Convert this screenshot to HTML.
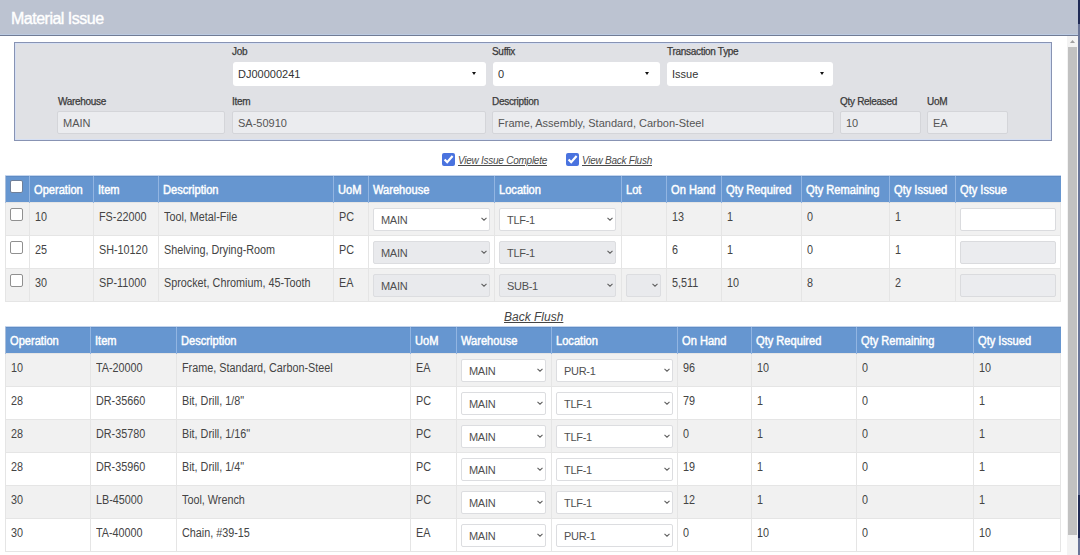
<!DOCTYPE html><html><head><meta charset="utf-8"><style>
*{box-sizing:border-box;margin:0;padding:0}
html,body{width:1080px;height:555px;overflow:hidden;background:#fff;font-family:"Liberation Sans", sans-serif;color:#333}
.abs{position:absolute}
#title{left:0;top:0;width:1078px;height:36px;background:#bcc3d1;border-bottom:1px solid #717c95;box-shadow:inset 0 -1px #bccbe2}
#title span{position:absolute;left:11px;top:10px;font-size:16px;letter-spacing:-0.5px;-webkit-text-stroke:0.4px #fff;color:#fff;line-height:18px;white-space:nowrap}
#strip{left:1078px;top:0;width:2px;height:555px;background:linear-gradient(#1f2a55 0,#1f2a55 24px,#6a7598 24px,#6a7598 495px,#1f2a55 495px,#1f2a55 538px,#6a7598 538px)}
#sb{left:1067px;top:36px;width:11px;height:519px;background:#f3f3f3}
#thumb{left:1068px;top:47px;width:9px;height:488px;background:#c1c1c1}
#panel{left:14px;top:42px;width:1038px;height:99px;background:#e0e1e5;border:1px solid #8893b3;box-shadow:inset 0 0 0 1px #d5dff3}
.lbl{position:absolute;font-size:10px;letter-spacing:-0.3px;color:#3a3a3a;-webkit-text-stroke:0.25px #3a3a3a;line-height:12px;white-space:nowrap}
.sel{position:absolute;height:24px;background:#fff;border-radius:3px}
.sel span{position:absolute;left:5px;top:5px;font-size:11px;color:#333;line-height:14px;white-space:nowrap}
.sel i{position:absolute;top:10px;width:0;height:0;border-left:2.5px solid transparent;border-right:2.5px solid transparent;border-top:3px solid #111}
.ro{position:absolute;height:23px;background:#ebecef;border:1px solid #d4d5d9;border-radius:2px}
.ro span{position:absolute;left:5px;top:4px;font-size:11px;color:#555;line-height:14px;white-space:nowrap}
.cb{position:absolute;width:13px;height:13px;background:#4a73df;border-radius:2px}
.cbl{position:absolute;font-size:10px;letter-spacing:-0.25px;font-style:italic;text-decoration:underline;color:#4a4a4a;line-height:12px;white-space:nowrap}
table{position:absolute;border-collapse:collapse;table-layout:fixed}
th{background:#6696d0;color:#fff;font-weight:bold;font-size:12px;text-align:left;height:27px;padding:0 0 0 4px;border-left:1px solid #92b5e2;border-top:1px solid #c3d5ee;box-shadow:inset 0 1px 0 #5e8bc4;white-space:nowrap;overflow:hidden}
th b{display:inline-block;transform:scaleX(0.925);transform-origin:0 50%;font-weight:normal;-webkit-text-stroke:0.45px #fff;position:relative;top:1px}
th:first-child{border-left:1px solid #a9bedb}
td{height:33px;font-size:12px;line-height:14px;color:#444;vertical-align:top;padding:7px 0 0 5px;border:1px solid #e5e5e5;white-space:nowrap;overflow:hidden;position:relative}
tr.o td{background:#f1f1f1}
td u{display:inline-block;text-decoration:none;transform:scaleX(0.9);transform-origin:0 0}
tr.e td{background:#fff}
.tsel{position:absolute;top:5px;height:23px;border:1px solid #dcdde0;border-radius:2px;background:#fff}
.tsel.d{background:#e9eaed}
.tsel span{position:absolute;left:7px;top:5px;font-size:11px;color:#505050;line-height:12px;letter-spacing:-0.3px}
.tsel svg{position:absolute;right:2px;top:8px}
.rcb{position:absolute;left:4px;top:5px;width:13px;height:13px;border:1px solid #909090;border-radius:2px;background:#fff}
.qin{position:absolute;left:4px;top:5px;width:96px;height:23px;border:1px solid #dadbde;border-radius:2px;background:#fff}
.qin.d{background:#ebecef}
</style></head><body>
<div id="title" class="abs"><span>Material Issue</span></div>
<div id="strip" class="abs"></div>
<div id="sb" class="abs"></div><div id="thumb" class="abs"></div>
<div id="panel" class="abs"></div>
<div class="lbl" style="left:232px;top:46px">Job</div>
<div class="lbl" style="left:492px;top:46px">Suffix</div>
<div class="lbl" style="left:667px;top:46px">Transaction Type</div>
<div class="sel" style="left:233px;top:62px;width:253px"><span>DJ00000241</span><i style="left:239px"></i></div>
<div class="sel" style="left:493px;top:62px;width:167px"><span>0</span><i style="left:152px"></i></div>
<div class="sel" style="left:667px;top:62px;width:166px"><span>Issue</span><i style="left:153px"></i></div>
<div class="lbl" style="left:58px;top:96px">Warehouse</div>
<div class="lbl" style="left:232px;top:96px">Item</div>
<div class="lbl" style="left:492px;top:96px">Description</div>
<div class="lbl" style="left:840px;top:96px">Qty Released</div>
<div class="lbl" style="left:927px;top:96px">UoM</div>
<div class="ro" style="left:57px;top:111px;width:168px"><span>MAIN</span></div>
<div class="ro" style="left:232px;top:111px;width:254px"><span>SA-50910</span></div>
<div class="ro" style="left:492px;top:111px;width:342px"><span>Frame, Assembly, Standard, Carbon-Steel</span></div>
<div class="ro" style="left:840px;top:111px;width:81px"><span>10</span></div>
<div class="ro" style="left:927px;top:111px;width:81px"><span>EA</span></div>
<div class="cb" style="left:442px;top:153px"><svg width="13" height="13" viewBox="0 0 13 13" style="position:absolute;left:0;top:0"><path d="M2.6 6.4 L5.2 9.2 L10.6 3" fill="none" stroke="#fff" stroke-width="2.2"/></svg></div>
<div class="cbl" style="left:458px;top:155px">View Issue Complete</div>
<div class="cb" style="left:566px;top:153px"><svg width="13" height="13" viewBox="0 0 13 13" style="position:absolute;left:0;top:0"><path d="M2.6 6.4 L5.2 9.2 L10.6 3" fill="none" stroke="#fff" stroke-width="2.2"/></svg></div>
<div class="cbl" style="left:582px;top:155px">View Back Flush</div>
<table style="left:5px;top:175px;width:1055px"><colgroup><col style="width:24px"><col style="width:64px"><col style="width:65px"><col style="width:175px"><col style="width:35px"><col style="width:126px"><col style="width:127px"><col style="width:45px"><col style="width:55px"><col style="width:80px"><col style="width:88px"><col style="width:66px"><col style="width:105px"></colgroup><tr><th style="padding:0"><div class="rcb" style="top:4px;left:4px;border-color:#6f7f99"></div></th><th><b>Operation</b></th><th><b>Item</b></th><th><b>Description</b></th><th><b>UoM</b></th><th><b>Warehouse</b></th><th><b>Location</b></th><th><b>Lot</b></th><th><b>On Hand</b></th><th><b>Qty Required</b></th><th><b>Qty Remaining</b></th><th><b>Qty Issued</b></th><th><b>Qty Issue</b></th></tr><tr class="o"><td style="padding:0"><div class="rcb"></div></td><td><u>10</u></td><td><u>FS-22000</u></td><td><u>Tool, Metal-File</u></td><td><u>PC</u></td><td style="padding:0"><div class="tsel" style="left:4px;width:117px"><span>MAIN</span><svg width="6" height="4" viewBox="0 0 6 4"><path d="M0.5 0.8 L3 3.2 L5.5 0.8" fill="none" stroke="#606060" stroke-width="1.1"/></svg></div></td><td style="padding:0"><div class="tsel" style="left:4px;width:117px"><span>TLF-1</span><svg width="6" height="4" viewBox="0 0 6 4"><path d="M0.5 0.8 L3 3.2 L5.5 0.8" fill="none" stroke="#606060" stroke-width="1.1"/></svg></div></td><td></td><td><u>13</u></td><td><u>1</u></td><td><u>0</u></td><td><u>1</u></td><td style="padding:0"><div class="qin"></div></td></tr><tr class="e"><td style="padding:0"><div class="rcb"></div></td><td><u>25</u></td><td><u>SH-10120</u></td><td><u>Shelving, Drying-Room</u></td><td><u>PC</u></td><td style="padding:0"><div class="tsel d" style="left:4px;width:117px"><span>MAIN</span><svg width="6" height="4" viewBox="0 0 6 4"><path d="M0.5 0.8 L3 3.2 L5.5 0.8" fill="none" stroke="#606060" stroke-width="1.1"/></svg></div></td><td style="padding:0"><div class="tsel d" style="left:4px;width:117px"><span>TLF-1</span><svg width="6" height="4" viewBox="0 0 6 4"><path d="M0.5 0.8 L3 3.2 L5.5 0.8" fill="none" stroke="#606060" stroke-width="1.1"/></svg></div></td><td></td><td><u>6</u></td><td><u>1</u></td><td><u>0</u></td><td><u>1</u></td><td style="padding:0"><div class="qin d"></div></td></tr><tr class="o"><td style="padding:0"><div class="rcb"></div></td><td><u>30</u></td><td><u>SP-11000</u></td><td><u>Sprocket, Chromium, 45-Tooth</u></td><td><u>EA</u></td><td style="padding:0"><div class="tsel d" style="left:4px;width:117px"><span>MAIN</span><svg width="6" height="4" viewBox="0 0 6 4"><path d="M0.5 0.8 L3 3.2 L5.5 0.8" fill="none" stroke="#606060" stroke-width="1.1"/></svg></div></td><td style="padding:0"><div class="tsel d" style="left:4px;width:117px"><span>SUB-1</span><svg width="6" height="4" viewBox="0 0 6 4"><path d="M0.5 0.8 L3 3.2 L5.5 0.8" fill="none" stroke="#606060" stroke-width="1.1"/></svg></div></td><td style="padding:0"><div class="tsel d" style="left:4px;width:35px"><svg width="6" height="4" viewBox="0 0 6 4"><path d="M0.5 0.8 L3 3.2 L5.5 0.8" fill="none" stroke="#606060" stroke-width="1.1"/></svg></div></td><td><u>5,511</u></td><td><u>10</u></td><td><u>8</u></td><td><u>2</u></td><td style="padding:0"><div class="qin d"></div></td></tr></table>
<div class="abs" style="left:504px;top:310px;font-size:12px;font-style:italic;text-decoration:underline;color:#444;white-space:nowrap;line-height:14px">Back Flush</div>
<table style="left:5px;top:326px;width:1055px"><colgroup><col style="width:85px"><col style="width:86px"><col style="width:234px"><col style="width:46px"><col style="width:95px"><col style="width:126px"><col style="width:74px"><col style="width:105px"><col style="width:117px"><col style="width:87px"></colgroup><tr><th><b>Operation</b></th><th><b>Item</b></th><th><b>Description</b></th><th><b>UoM</b></th><th><b>Warehouse</b></th><th><b>Location</b></th><th><b>On Hand</b></th><th><b>Qty Required</b></th><th><b>Qty Remaining</b></th><th><b>Qty Issued</b></th></tr><tr class="o"><td><u>10</u></td><td><u>TA-20000</u></td><td><u>Frame, Standard, Carbon-Steel</u></td><td><u>EA</u></td><td style="padding:0"><div class="tsel" style="left:4px;width:85px"><span>MAIN</span><svg width="6" height="4" viewBox="0 0 6 4"><path d="M0.5 0.8 L3 3.2 L5.5 0.8" fill="none" stroke="#606060" stroke-width="1.1"/></svg></div></td><td style="padding:0"><div class="tsel" style="left:4px;width:117px"><span>PUR-1</span><svg width="6" height="4" viewBox="0 0 6 4"><path d="M0.5 0.8 L3 3.2 L5.5 0.8" fill="none" stroke="#606060" stroke-width="1.1"/></svg></div></td><td><u>96</u></td><td><u>10</u></td><td><u>0</u></td><td><u>10</u></td></tr><tr class="e"><td><u>28</u></td><td><u>DR-35660</u></td><td><u>Bit, Drill, 1/8"</u></td><td><u>PC</u></td><td style="padding:0"><div class="tsel" style="left:4px;width:85px"><span>MAIN</span><svg width="6" height="4" viewBox="0 0 6 4"><path d="M0.5 0.8 L3 3.2 L5.5 0.8" fill="none" stroke="#606060" stroke-width="1.1"/></svg></div></td><td style="padding:0"><div class="tsel" style="left:4px;width:117px"><span>TLF-1</span><svg width="6" height="4" viewBox="0 0 6 4"><path d="M0.5 0.8 L3 3.2 L5.5 0.8" fill="none" stroke="#606060" stroke-width="1.1"/></svg></div></td><td><u>79</u></td><td><u>1</u></td><td><u>0</u></td><td><u>1</u></td></tr><tr class="o"><td><u>28</u></td><td><u>DR-35780</u></td><td><u>Bit, Drill, 1/16"</u></td><td><u>PC</u></td><td style="padding:0"><div class="tsel" style="left:4px;width:85px"><span>MAIN</span><svg width="6" height="4" viewBox="0 0 6 4"><path d="M0.5 0.8 L3 3.2 L5.5 0.8" fill="none" stroke="#606060" stroke-width="1.1"/></svg></div></td><td style="padding:0"><div class="tsel" style="left:4px;width:117px"><span>TLF-1</span><svg width="6" height="4" viewBox="0 0 6 4"><path d="M0.5 0.8 L3 3.2 L5.5 0.8" fill="none" stroke="#606060" stroke-width="1.1"/></svg></div></td><td><u>0</u></td><td><u>1</u></td><td><u>0</u></td><td><u>1</u></td></tr><tr class="e"><td><u>28</u></td><td><u>DR-35960</u></td><td><u>Bit, Drill, 1/4"</u></td><td><u>PC</u></td><td style="padding:0"><div class="tsel" style="left:4px;width:85px"><span>MAIN</span><svg width="6" height="4" viewBox="0 0 6 4"><path d="M0.5 0.8 L3 3.2 L5.5 0.8" fill="none" stroke="#606060" stroke-width="1.1"/></svg></div></td><td style="padding:0"><div class="tsel" style="left:4px;width:117px"><span>TLF-1</span><svg width="6" height="4" viewBox="0 0 6 4"><path d="M0.5 0.8 L3 3.2 L5.5 0.8" fill="none" stroke="#606060" stroke-width="1.1"/></svg></div></td><td><u>19</u></td><td><u>1</u></td><td><u>0</u></td><td><u>1</u></td></tr><tr class="o"><td><u>30</u></td><td><u>LB-45000</u></td><td><u>Tool, Wrench</u></td><td><u>PC</u></td><td style="padding:0"><div class="tsel" style="left:4px;width:85px"><span>MAIN</span><svg width="6" height="4" viewBox="0 0 6 4"><path d="M0.5 0.8 L3 3.2 L5.5 0.8" fill="none" stroke="#606060" stroke-width="1.1"/></svg></div></td><td style="padding:0"><div class="tsel" style="left:4px;width:117px"><span>TLF-1</span><svg width="6" height="4" viewBox="0 0 6 4"><path d="M0.5 0.8 L3 3.2 L5.5 0.8" fill="none" stroke="#606060" stroke-width="1.1"/></svg></div></td><td><u>12</u></td><td><u>1</u></td><td><u>0</u></td><td><u>1</u></td></tr><tr class="e"><td><u>30</u></td><td><u>TA-40000</u></td><td><u>Chain, #39-15</u></td><td><u>EA</u></td><td style="padding:0"><div class="tsel" style="left:4px;width:85px"><span>MAIN</span><svg width="6" height="4" viewBox="0 0 6 4"><path d="M0.5 0.8 L3 3.2 L5.5 0.8" fill="none" stroke="#606060" stroke-width="1.1"/></svg></div></td><td style="padding:0"><div class="tsel" style="left:4px;width:117px"><span>PUR-1</span><svg width="6" height="4" viewBox="0 0 6 4"><path d="M0.5 0.8 L3 3.2 L5.5 0.8" fill="none" stroke="#606060" stroke-width="1.1"/></svg></div></td><td><u>0</u></td><td><u>10</u></td><td><u>0</u></td><td><u>10</u></td></tr></table>
<svg class="abs" style="left:1067px;top:36px" width="11" height="11" viewBox="0 0 11 11"><polygon points="3,7 5.5,4 8,7" fill="#a0a0a0"/></svg>
</body></html>
